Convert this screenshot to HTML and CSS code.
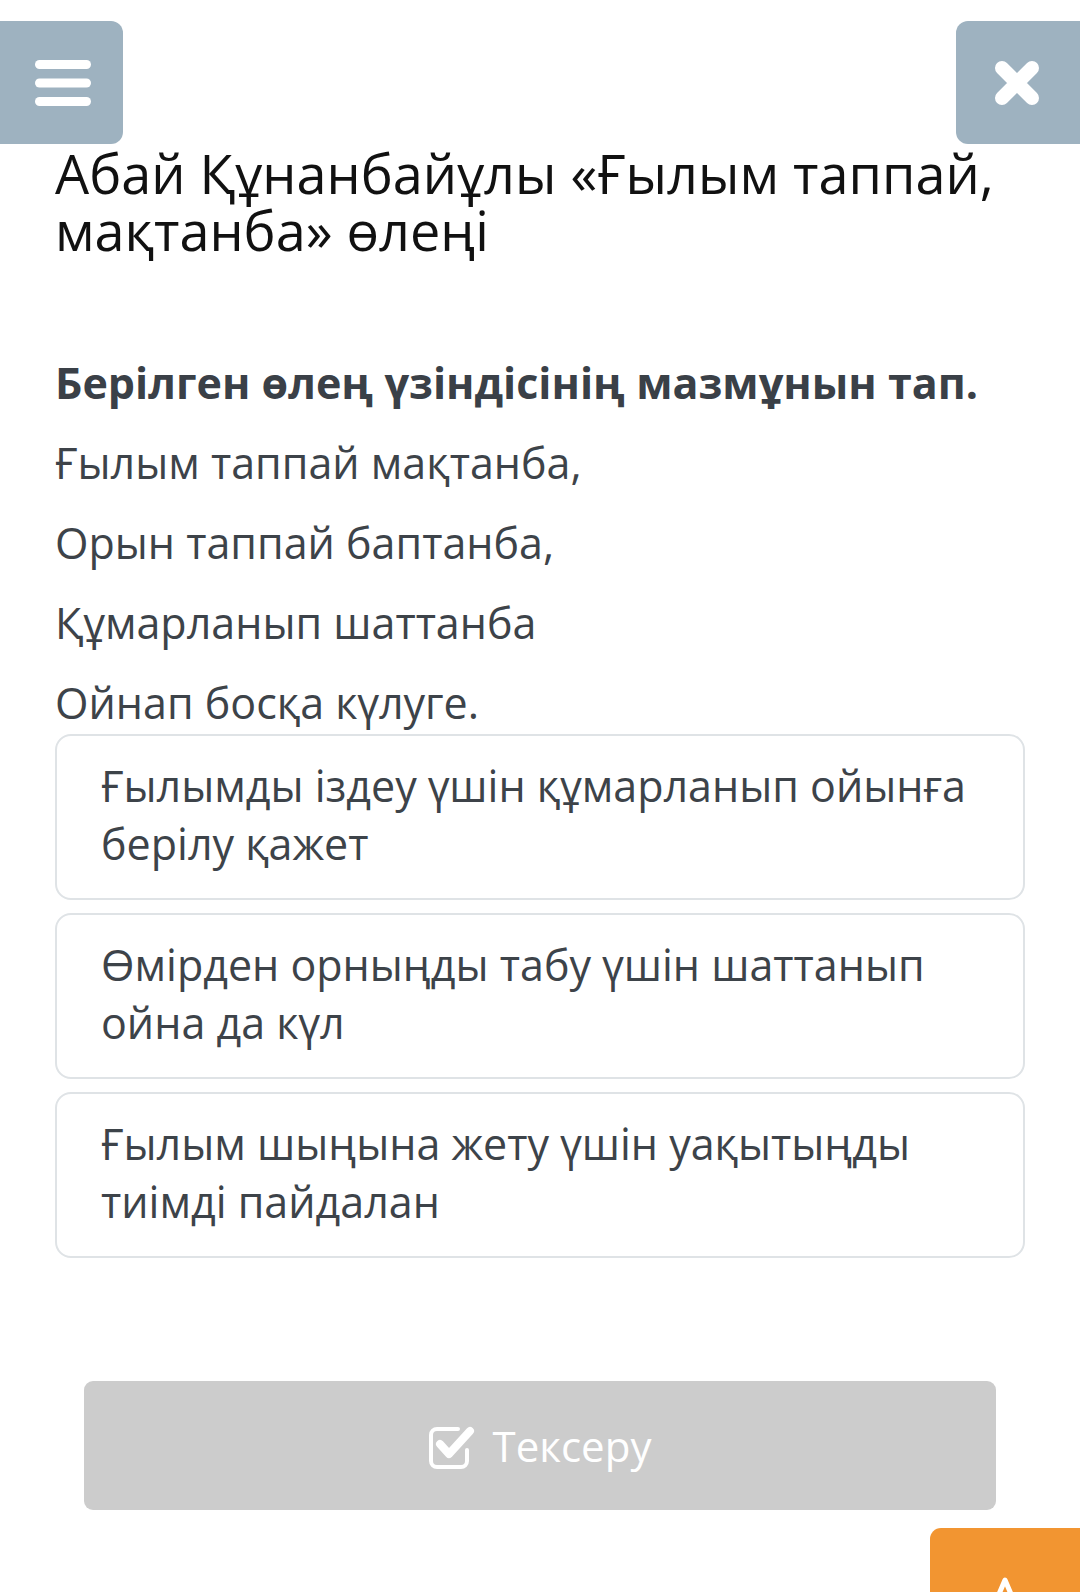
FILE: index.html
```html
<!DOCTYPE html>
<html lang="kk">
<head>
<meta charset="utf-8">
<title>Абай Құнанбайұлы</title>
<link rel="stylesheet" href="styles.css">
</head>
<body>
<div class="page">
  <header class="topbar">
    <button class="tool-btn menu-btn" aria-label="Мәзір">
      <svg width="56" height="46" viewBox="0 0 56 46"><rect x="0" y="0" width="56" height="9" rx="4.5" fill="#fff"/><rect x="0" y="18.5" width="56" height="9" rx="4.5" fill="#fff"/><rect x="0" y="37" width="56" height="9" rx="4.5" fill="#fff"/></svg>
    </button>
    <button class="tool-btn close-btn" aria-label="Жабу">
      <svg width="48" height="48" viewBox="-24 -24 48 48"><path d="M-15 -15 L15 15 M15 -15 L-15 15" stroke="#fff" stroke-width="14" stroke-linecap="round"/></svg>
    </button>
  </header>

  <h1 class="title">Абай Құнанбайұлы «Ғылым таппай, мақтанба» өлеңі</h1>

  <p class="question">Берілген өлең үзіндісінің мазмұнын тап.</p>

  <div class="poem">
    <p>Ғылым таппай мақтанба,</p>
    <p>Орын таппай баптанба,</p>
    <p>Құмарланып шаттанба</p>
    <p>Ойнап босқа күлуге.</p>
  </div>

  <div class="options">
    <div class="option">Ғылымды іздеу үшін құмарланып ойынға берілу қажет</div>
    <div class="option">Өмірден орныңды табу үшін шаттанып ойна да күл</div>
    <div class="option">Ғылым шыңына жету үшін уақытыңды тиімді пайдалан</div>
  </div>

  <div class="actions">
    <button class="check-btn">
      <svg class="check-icon" width="46" height="44" viewBox="0 0 46 44">
        <path d="M29 4 H8 A6 6 0 0 0 2 10 V36 A6 6 0 0 0 8 42 H32 A6 6 0 0 0 38 36 V25" fill="none" stroke="#fff" stroke-width="4" stroke-linecap="round"/>
        <path d="M11 19 L20 29 L41 6" fill="none" stroke="#fff" stroke-width="8" stroke-linecap="round" stroke-linejoin="round"/>
      </svg>
      <span>Тексеру</span>
    </button>
  </div>

  <button class="scroll-top" aria-label="Жоғары">
    <svg width="60" height="70" viewBox="0 0 60 70"><path d="M6 70 L30 14 L54 70" fill="none" stroke="#fff" stroke-width="5" stroke-linejoin="round"/><path d="M17 70 L30 38 L43 70" fill="none" stroke="#fff" stroke-width="4" stroke-linejoin="round"/></svg>
  </button>
</div>
</body>
</html>
```

FILE: styles.css
```css
html, body {
  margin: 0;
  padding: 0;
  overflow: hidden;
  background: #fff;
}

.page {
  position: relative;
  width: 1080px;
  height: 1592px;
  box-sizing: border-box;
  padding-top: 21px;
  font-family: "Open Sans", "Noto Sans", sans-serif;
  color: #3d4349;
}

.topbar {
  display: flex;
  justify-content: space-between;
  height: 123px;
}

.tool-btn {
  border: 0;
  padding: 0;
  background: #9eb2c0;
  height: 123px;
  display: flex;
  align-items: center;
  justify-content: center;
}

.menu-btn {
  width: 123px;
  border-radius: 0 12px 12px 0;
  padding-left: 2px;
}

.close-btn {
  width: 124px;
  border-radius: 12px 0 0 12px;
  padding-right: 2px;
}

.title {
  margin: 1px 55px 0;
  font-size: 54px;
  font-weight: 400;
  line-height: 57px;
  color: #111;
}

.question {
  margin: 95px 55px 0;
  font-size: 43px;
  font-weight: 700;
  line-height: 57px;
  color: #3a4047;
}

.poem {
  display: flex;
  flex-direction: column;
  gap: 23px;
  margin: 23px 55px 0;
}

.poem p {
  margin: 0;
  font-size: 43px;
  line-height: 57px;
}

.options {
  display: flex;
  flex-direction: column;
  gap: 13px;
  margin: 3px 55px 0;
}

.option {
  border: 2px solid #dfe3e6;
  border-radius: 16px;
  padding: 21px 36px 25px 44px;
  font-size: 43px;
  line-height: 58px;
  color: #3d4349;
}

.actions {
  margin: 123px 84px 0;
}

.check-btn {
  width: 100%;
  height: 129px;
  border: 0;
  border-radius: 9px;
  background: #cccccc;
  color: #fff;
  font-family: "Open Sans", "Noto Sans", sans-serif;
  font-size: 42px;
  display: flex;
  align-items: center;
  justify-content: center;
  gap: 18px;
  padding: 0;
}

.check-icon {
  margin-top: 2px;
}

.scroll-top {
  position: absolute;
  left: 930px;
  top: 1528px;
  width: 160px;
  height: 110px;
  border: 0;
  border-radius: 11px 0 0 0;
  background: #f29531;
  padding: 38px 10px 0 0;
  display: flex;
  justify-content: center;
  align-items: flex-start;
}
```
